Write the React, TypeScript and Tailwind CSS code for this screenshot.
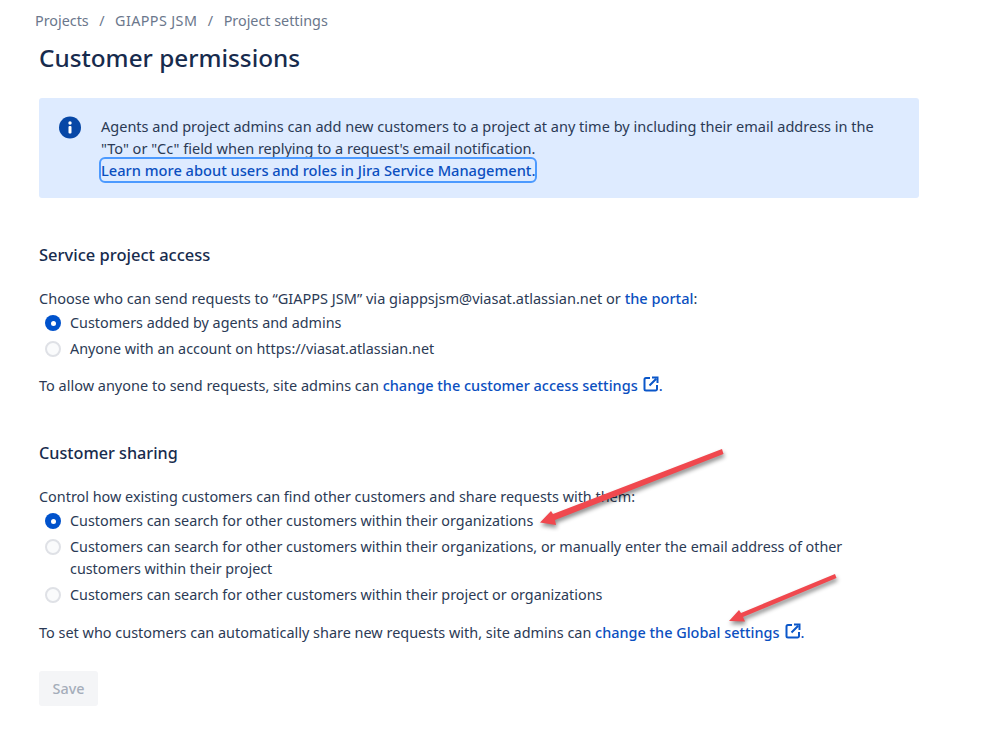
import React from "react";

const fontStack = { fontFamily: '"Noto Sans", sans-serif' };

const ExternalIcon = () => (
  <svg width="16" height="16" viewBox="0 0 16 16" fill="none" className="inline-block ml-[5px] align-[-1px]">
    <path d="M7 2H3a1.500 1.500 0 0 0-1.500 1.500v9.500A1.500 1.500 0 0 0 3 14.500h9.500A1.500 1.500 0 0 0 14 13V9" stroke="#0b57c9" strokeWidth="2" />
    <path d="M6.500 9.500 13 3M9 1.500h5.500V7" stroke="#0b57c9" strokeWidth="2" />
  </svg>
);

const Radio = ({ checked }: { checked?: boolean }) =>
  checked ? (
    <span className="w-4 h-4 rounded-full bg-[#0052cc] flex items-center justify-center shrink-0">
      <span className="w-[5px] h-[5px] rounded-full bg-white" />
    </span>
  ) : (
    <span className="w-4 h-4 rounded-full bg-[#fafbfc] border-2 border-[#dfe1e6] shrink-0" />
  );

const Option = ({ checked, children }: { checked?: boolean; children: React.ReactNode }) => (
  <div className="flex items-start pl-[6px] py-[2px]">
    <span className="h-[22px] flex items-center mr-[9px]">
      <Radio checked={checked} />
    </span>
    <span className="w-[790px]">{children}</span>
  </div>
);

const A = ({ children }: { children: React.ReactNode }) => (
  <a className="text-[#0b4fc0] font-medium">{children}</a>
);

export default function App() {
  return (
    <div style={fontStack} className="relative w-[999px] h-[749px] bg-white overflow-hidden text-[14.35px] leading-[22px] text-[#2b3a55]">
      <div className="pt-[10px] pl-[35px] flex gap-[10.5px] text-[#6b778c]">
        <span>Projects</span>
        <span>/</span>
        <span className="tracking-[0.4px]">GIAPPS JSM</span>
        <span>/</span>
        <span>Project settings</span>
      </div>
      <div className="pl-[39px] pr-[80px]">
        <h1 className="mt-[8px] text-[24.3px] leading-[36px] font-medium text-[#172b4d]">Customer permissions</h1>
        <div className="mt-[22px] h-[100px] bg-[#deebff] rounded-[3px] flex pt-[17px] pl-[19px] text-[14.52px]">
          <svg width="24" height="24" viewBox="0 0 24 24" className="shrink-0 mt-[1px]">
            <circle cx="12" cy="11.500" r="11" fill="#0747a6" />
            <rect x="10.500" y="10" width="3" height="7.500" rx="1" fill="#fff" />
            <circle cx="12" cy="7" r="1.700" fill="#fff" />
          </svg>
          <div className="ml-[19px] w-[780px]">
            <p>Agents and project admins can add new customers to a project at any time by including their email address in the "To" or "Cc" field when replying to a request's email notification.</p>
            <a className="inline-block text-[14.63px] text-[#0b4fc0] font-medium rounded-[4px] outline-2 outline-[#4c9aff] h-[22px]">Learn more about users and roles in Jira Service Management.</a>
          </div>
        </div>

        <h2 className="mt-[45px] text-[16.5px] leading-[24px] font-medium text-[#172b4d]">Service project access</h2>
        <p className="mt-[20px] text-[14.55px]">Choose who can send requests to “GIAPPS JSM” via giappsjsm@viasat.atlassian.net or <A>the portal</A>:</p>
        <div className="mt-[1px]">
          <Option checked>Customers added by agents and admins</Option>
          <Option>Anyone with an account on https://viasat.atlassian.net</Option>
        </div>
        <p className="mt-[13px] text-[14.49px]">To allow anyone to send requests, site admins can <A>change the customer access settings</A><ExternalIcon /><A>.</A></p>

        <h2 className="mt-[44px] text-[16.2px] leading-[24px] font-medium text-[#172b4d]">Customer sharing</h2>
        <p className="mt-[21px] text-[14.4px]">Control how existing customers can find other customers and share requests with them:</p>
        <Option checked>Customers can search for other customers within their organizations</Option>
        <Option>Customers can search for other customers within their organizations, or manually enter the email address of other customers within their project</Option>
        <Option>Customers can search for other customers within their project or organizations</Option>
        <p className="mt-[14px] text-[14.45px]">To set who customers can automatically share new requests with, site admins can <A>change the Global settings</A><ExternalIcon /><A>.</A></p>

        <button className="block mt-[27px] w-[59px] h-[35px] rounded-[3px] bg-[#f4f5f7] text-[#a5adba] font-medium">Save</button>
      </div>

      {/* annotation arrows pasted over the screenshot */}
      <svg className="absolute left-0 top-0 drop-shadow-[1px_3px_2px_rgba(0,0,0,0.45)]" width="999" height="749" viewBox="0 0 999 749" fill="none">
        <path d="M722 449 L553 514 L551 511 L540 522.500 L556 525 L555 520 L723.500 454Z" fill="#f0484e" />
        <path d="M835 574 L741 613 L739 610 L729 621 L745 621.500 L743 617 L836.500 578Z" fill="#f0484e" />
      </svg>
    </div>
  );
}
